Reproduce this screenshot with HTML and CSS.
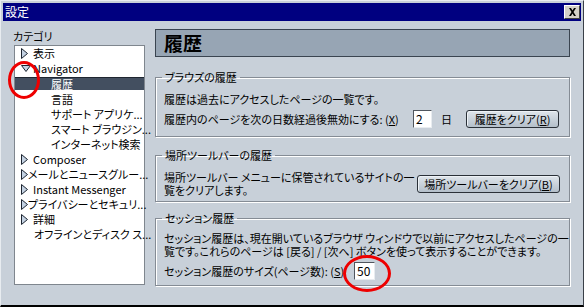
FILE: index.html
```html
<!DOCTYPE html>
<html lang="ja">
<head>
    <meta charset="UTF-8">
    <title>設定</title>
    <link rel="stylesheet" href="styles.css">
</head>
<body>
    <div class="window">
        <div class="titlebar">
            <span class="title">設定</span>
            <span class="close">
                <svg width="9" height="8" viewBox="0 0 9 8"><path d="M1 0h2l1.5 2.5L6 0h2L5.5 4 8 8H6L4.5 5.5 3 8H1l2.5-4z" fill="#000"/></svg>
            </span>
        </div>

        <div class="content">
            <!-- カテゴリ ツリー -->
            <div class="sidebar">
                <div class="side-label">カテゴリ</div>
                <ul class="tree">
                    <li class="item"><span class="twisty"><svg width="7" height="11" viewBox="0 0 7 11"><path d="M0.5 0.5L6.5 5.5L0.5 10.5Z" fill="#c4d2e2" stroke="#1c2430"/></svg></span>表示</li>
                    <li class="item"><span class="twisty"><svg width="10" height="7" viewBox="0 0 10 7"><path d="M0.5 0.5L9.5 0.5L5 6.5Z" fill="#c4d2e2" stroke="#1c2430"/></svg></span>Navigator</li>
                    <li class="item child selected">履歴</li>
                    <li class="item child">言語</li>
                    <li class="item child">サポート アプリケ...</li>
                    <li class="item child">スマート ブラウジン...</li>
                    <li class="item child">インターネット検索</li>
                    <li class="item"><span class="twisty"><svg width="7" height="11" viewBox="0 0 7 11"><path d="M0.5 0.5L6.5 5.5L0.5 10.5Z" fill="#c4d2e2" stroke="#1c2430"/></svg></span>Composer</li>
                    <li class="item"><span class="twisty"><svg width="7" height="11" viewBox="0 0 7 11"><path d="M0.5 0.5L6.5 5.5L0.5 10.5Z" fill="#c4d2e2" stroke="#1c2430"/></svg></span>メールとニュースグルー...</li>
                    <li class="item"><span class="twisty"><svg width="7" height="11" viewBox="0 0 7 11"><path d="M0.5 0.5L6.5 5.5L0.5 10.5Z" fill="#c4d2e2" stroke="#1c2430"/></svg></span>Instant Messenger</li>
                    <li class="item"><span class="twisty"><svg width="7" height="11" viewBox="0 0 7 11"><path d="M0.5 0.5L6.5 5.5L0.5 10.5Z" fill="#c4d2e2" stroke="#1c2430"/></svg></span>プライバシーとセキュリ...</li>
                    <li class="item"><span class="twisty"><svg width="7" height="11" viewBox="0 0 7 11"><path d="M0.5 0.5L6.5 5.5L0.5 10.5Z" fill="#c4d2e2" stroke="#1c2430"/></svg></span>詳細</li>
                    <li class="item leaf">オフラインとディスク ス...</li>
                </ul>
                <!-- 赤い丸 (注記) -->
                <span class="mark mark-tree"></span>
            </div>

            <!-- 設定パネル -->
            <div class="panel">
                <div class="panel-header">履歴</div>

                <fieldset class="group group-browse">
                    <legend>ブラウズの履歴</legend>
                    <p class="line">履歴は過去にアクセスしたページの一覧です。</p>
                    <div class="row">
                        <span class="label label-days">履歴内のページを次の日数経過後無効にする: (<u>X</u>)</span>
                        <span class="field">2</span>
                        <span class="unit">日</span>
                        <span class="button btn-clear">履歴をクリア(<u>R</u>)</span>
                    </div>
                </fieldset>

                <fieldset class="group group-location">
                    <legend>場所ツールバーの履歴</legend>
                    <div class="row">
                        <p class="text">場所ツールバー メニューに保管されているサイトの一<br>覧をクリアします。</p>
                        <span class="button btn-location">場所ツールバーをクリア(<u>B</u>)</span>
                    </div>
                </fieldset>

                <fieldset class="group group-session">
                    <legend>セッション履歴</legend>
                    <p class="text">セッション履歴は、現在開いているブラウザ ウィンドウで以前にアクセスしたページの一<br>覧です。これらのページは [戻る] / [次へ] ボタンを使って表示することができます。</p>
                    <div class="row">
                        <span class="label label-size">セッション履歴のサイズ(ページ数): (<u>S</u>)</span>
                        <span class="field">50</span>
                        <span class="mark mark-size"></span>
                    </div>
                </fieldset>
            </div>
        </div>
    </div>
</body>
</html>
```

FILE: styles.css
```css
body {
    margin: 0;
    font-family: "Noto Sans CJK JP", "Liberation Sans", sans-serif;
    font-size: 11px;
    font-feature-settings: "palt";
    color: #000;
    background: #c8d0d9;
}
.window {
    width: 584px;
    height: 307px;
    box-sizing: border-box;
    background: #c8d0d9;
    border-top: 1px solid #e8ecf0;
    border-left: 1px solid #e8ecf0;
    border-right: 1px solid #3a4048;
    border-bottom: 2px solid #000;
    padding: 2px 2px 0 2px;
    display: flex;
    flex-direction: column;
    overflow: hidden;
}
.titlebar {
    height: 18px;
    background: #000080;
    display: flex;
    align-items: center;
    justify-content: space-between;
    padding: 0 1px 0 2px;
}
.title {
    color: #fff;
    font-size: 12px;
    line-height: 14px;
}
.close {
    width: 14px;
    height: 12px;
    background: #d4d0c8;
    border: 1px solid;
    border-color: #fff #404040 #404040 #fff;
    display: flex;
    align-items: center;
    justify-content: center;
}
.content {
    flex: 1;
    display: flex;
    padding: 0 0 0 11px;
}
.sidebar {
    position: relative;
    flex: none;
    width: 131px;
    display: flex;
    flex-direction: column;
}
.side-label {
    line-height: 14px;
    margin: 8px 0 2px -1px;
}
.tree {
    list-style: none;
    margin: 0;
    padding: 0;
    height: 240px;
    box-sizing: border-box;
    background: #fff;
    border: 1px solid #7f868e;
}
.item {
    height: 15px;
    line-height: 15px;
    padding-left: 6px;
    display: flex;
    align-items: center;
    white-space: nowrap;
}
.twisty {
    width: 12px;
    display: flex;
    align-items: center;
}
.child {
    padding-left: 36px;
}
.leaf {
    padding-left: 19px;
}
.selected {
    height: 12px;
    margin: 1px 0 2px 0;
    background: #434f60;
    border-top: 1px solid #1f2630;
    color: #fff;
}
.panel {
    flex: none;
    width: 415px;
    margin-left: 10px;
    margin-top: 8px;
    display: flex;
    flex-direction: column;
}
.panel-header {
    height: 26px;
    line-height: 26px;
    background: #97a5b4;
    border: 1px solid #3a4450;
    padding-left: 8px;
    font-size: 19px;
    font-weight: bold;
}
.group {
    margin: 11px 0 0 0;
    padding: 0 9px 0 8px;
    min-width: 0;
    border: 1px solid #858c95;
    box-shadow: inset 1px 1px #fff, 1px 1px #fff;
}
.group legend {
    padding: 0 3px;
    margin-left: -2px;
    line-height: 14px;
}
.line, .text {
    margin: 0;
    line-height: 13px;
    white-space: nowrap;
}
.group-browse {
    margin-top: 13px;
}
.group-browse .line {
    margin-top: 9px;
}
.group-browse .row {
    margin: 4px 0 8px 0;
}
.row {
    display: flex;
    align-items: center;
    white-space: nowrap;
}
.label {
    flex: none;
}
.label-days {
    width: 249px;
}
.label-size {
    width: 190px;
}
.field {
    flex: none;
    width: 15px;
    height: 16px;
    line-height: 16px;
    background: #fff;
    border: 1px solid;
    border-color: #50565e #e8ecf0 #e8ecf0 #50565e;
    padding-left: 2px;
    font-size: 12px;
}
.label-size + .field {
    width: 17px;
}
.unit {
    margin-left: 9px;
}
.button {
    flex: none;
    height: 16px;
    line-height: 16px;
    box-sizing: content-box;
    border: 1px solid #2a3038;
    border-radius: 3px;
    background: linear-gradient(#dfe5eb, #b4bfca);
    box-shadow: inset 1px 1px #eef2f6;
    text-align: center;
}
.btn-clear {
    margin-left: 14px;
    width: 91px;
}
.group-location .row {
    margin: 9px 0 4px 0;
    justify-content: space-between;
}
.btn-location {
    width: 141px;
}
.group-session {
    margin-top: 9px;
}
.group-session .text {
    margin-top: 7px;
}
.group-session .row {
    position: relative;
    margin: 4px 0 5px 0;
}
.mark {
    position: absolute;
    border: 3px solid #ee0000;
    border-radius: 50%;
    box-sizing: border-box;
}
.mark-tree {
    left: -6px;
    top: 40px;
    width: 32px;
    height: 38px;
}
.mark-size {
    left: 179px;
    top: -7px;
    width: 48px;
    height: 37px;
}
```
